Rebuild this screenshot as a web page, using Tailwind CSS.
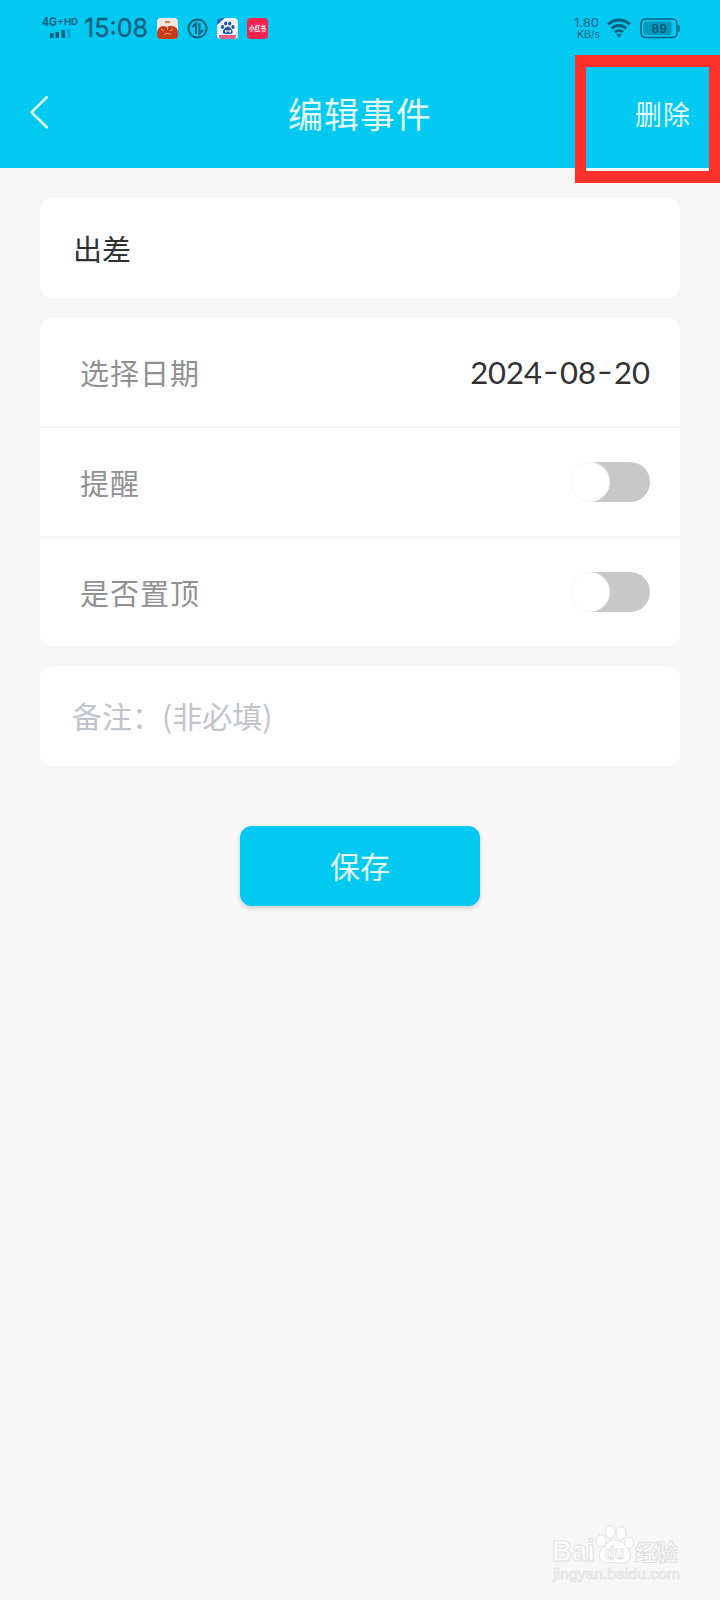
<!DOCTYPE html>
<html lang="zh-CN">
<head>
<meta charset="utf-8">
<title>编辑事件</title>
<script src="https://cdn.jsdelivr.net/npm/@tailwindcss/browser@4"></script>
</head>
<body class="bg-[#f6f6f6] font-['Noto_Sans_CJK_SC',sans-serif]">
<div class="relative flex h-[1600px] w-[720px] flex-col overflow-hidden bg-[#f7f7f7]">
  <header class="flex h-[168px] shrink-0 flex-col bg-[#02c9f1]">
    <div class="flex h-14 items-center justify-between pr-10 pl-[41px] font-[Inter,sans-serif] text-[#075f7d]">
      <div class="flex items-center">
        <svg class="h-[26px] w-[40px] overflow-visible" viewBox="0 0 40 26">
          <g font-family="Inter" font-weight="700" fill="#075f7d">
            <text x="1" y="11" font-size="11.500" textLength="15" lengthAdjust="spacingAndGlyphs">4G</text>
            <text x="16.500" y="9" font-size="9">+</text>
            <text x="23" y="9.500" font-size="9" textLength="14" lengthAdjust="spacingAndGlyphs">HD</text>
          </g>
          <g fill="#075f7d">
            <rect x="9" y="18" width="3.500" height="5"/><rect x="14.500" y="17" width="3.500" height="6"/><rect x="20.500" y="15" width="3.500" height="8"/><rect x="26" y="13.500" width="4" height="9.500" opacity=".2"/>
          </g>
        </svg>
        <svg class="ml-[3px] h-8 w-[65px]" viewBox="0 0 65 32"><text x="0" y="25" font-family="Inter" font-weight="400" font-size="25" fill="#075f7d" stroke="#075f7d" stroke-width=".3" textLength="64" lengthAdjust="spacingAndGlyphs">15:08</text></svg>
        <svg class="ml-[8px] h-[21px] w-[21px]" viewBox="0 0 21 21">
          <rect width="21" height="20.500" rx="4" fill="#f3e8df"/><path d="M8 3h5v2H8z" fill="#e8783f"/>
          <path d="M0 16C0 11 3 8 6.500 8c2 0 2.500 1.500 4.500.5C15 7 21 9 21 14v3a4 4 0 0 1-4 4H4a4 4 0 0 1-4-4z" fill="#c63c1b"/>
          <path d="m4 11 3 2M16 11l-3 2M10.500 9v3M7 17c1-2 6-2 7 0" stroke="#ffb48c" stroke-width="1" fill="none"/>
        </svg>
        <svg class="ml-[9px] h-[21px] w-[21px]" viewBox="0 0 21 21" fill="none" stroke="#075f7d" stroke-width="2">
          <circle cx="10.500" cy="10.500" r="9"/><path d="M5.500 9 9 5.500V16M12.500 5v10.500l3.500-3.500"/>
        </svg>
        <svg class="ml-[9px] h-[21px] w-[21px]" viewBox="0 0 21 21">
          <rect width="21" height="21" rx="4" fill="#f0f6ff"/><path d="M0 4a4 4 0 0 1 4-4h4L0 7z" fill="#2468c9"/>
          <g fill="#2054a5"><ellipse cx="5.500" cy="9" rx="1.600" ry="2"/><ellipse cx="8.700" cy="5.500" rx="1.600" ry="2"/><ellipse cx="12.700" cy="5.500" rx="1.600" ry="2"/><ellipse cx="16" cy="9" rx="1.600" ry="2"/><path d="M10.700 8.500c2 0 5 3.500 5 5.500s-2 2-5 2-5 0-5-2 3-5.500 5-5.500z"/></g>
          <path d="M8.500 12v2h1.500v-2M12 12v2h1.500v-2" stroke="#fff" fill="none"/><path d="M2 17h17v2a2 2 0 0 1-2 2H4a2 2 0 0 1-2-2z" fill="#e7627f"/>
        </svg>
        <svg class="ml-[9px] h-[21px] w-[21px]" viewBox="0 0 21 21">
          <rect width="21" height="21" rx="4" fill="#f7234f"/><text x="2" y="13" font-family="Noto Sans CJK SC" font-size="6.500" font-weight="700" fill="#fff" textLength="17" lengthAdjust="spacingAndGlyphs">小红书</text>
        </svg>
      </div>
      <div class="flex items-center">
        <svg class="h-6 w-[28px]" viewBox="0 0 28 24"><g font-family="Inter" fill="#075f7d"><text x="0" y="11" font-size="12" textLength="25" lengthAdjust="spacingAndGlyphs">1.80</text><text x="3" y="21.500" font-size="10" textLength="23" lengthAdjust="spacingAndGlyphs">KB/s</text></g></svg>
        <svg class="ml-[5px] h-5 w-6" viewBox="0 0 24 20" fill="none" stroke="#075f7d" stroke-width="2.800"><path d="M1.200 6.500c6-6 15.600-6 21.600 0M4.700 10.500c4-4 10.600-4 14.600 0M8 14.300c2.200-2.200 5.800-2.200 8 0"/><path d="m9.500 16.800 2.500 2.700 2.500-2.700a4 4 0 0 0-5 0z" fill="#075f7d" stroke="none"/></svg>
        <svg class="ml-[9px] h-[21px] w-[40px]" viewBox="0 0 40 21"><rect x="1" y="1" width="36" height="18.500" rx="4.500" fill="none" stroke="#075f7d" stroke-width="1.500"/><rect x="3.500" y="3.500" width="28" height="13.500" rx="2" fill="#0798bb"/><path d="M39 7.500v6" stroke="#075f7d" stroke-width="1.500"/><text x="11.500" y="14.500" font-family="Inter" font-size="12" font-weight="500" fill="#075070" textLength="15.500">89</text></svg>
      </div>
    </div>
    <nav class="grid flex-1 grid-cols-3 items-center px-[29px] text-[#e2fcff]">
      <svg class="h-[34px] w-5" viewBox="0 0 20 34" fill="none" stroke="#e2fcff" stroke-width="2.500"><path d="M18.500 1.500 2.500 17.300l16 15.700"/></svg>
      <h1 class="pt-px text-center text-[35px] leading-[52px] tracking-[1px] whitespace-nowrap">编辑事件</h1>
      <div class="pt-[3px] text-right text-[27px] leading-[52px] tracking-[1px]">删除</div>
    </nav>
  </header>

  <main class="flex flex-col gap-5 px-10 pt-[30px]">
    <div class="flex h-[100px] items-center rounded-xl bg-white pt-0.5 pl-[33px] text-[29px] text-[#303133]">出差</div>
    <div class="flex h-[328px] flex-col divide-y-2 divide-[#f6f6f6] rounded-xl bg-white text-[29px] tracking-[1px] text-[#909193]">
      <div class="flex h-[110px] items-center justify-between pr-[30px] pl-10">
        <span class="pt-px">选择日期</span>
        <span class="flex items-center pt-px font-[Lato,sans-serif] text-[31px] tracking-normal text-[#303133]"><span>2024</span><span class="flex w-[18px] justify-center"><span class="inline-block scale-x-[1.4] pb-1">-</span></span><span>08</span><span class="flex w-[18px] justify-center"><span class="inline-block scale-x-[1.4] pb-1">-</span></span><span>20</span></span>
      </div>
      <div class="flex h-[110px] items-center justify-between pr-[30px] pl-10">
        <span class="pt-px">提醒</span>
        <span class="flex h-10 w-20 rounded-full bg-gradient-to-r from-white from-25% to-[#c8c8c8] to-25%"><span class="size-10 rounded-full border border-[#f8f8f8] bg-white"></span></span>
      </div>
      <div class="flex h-[108px] items-center justify-between pr-[30px] pl-10">
        <span class="pt-px">是否置顶</span>
        <span class="flex h-10 w-20 rounded-full bg-gradient-to-r from-white from-25% to-[#c8c8c8] to-25%"><span class="size-10 rounded-full border border-[#f8f8f8] bg-white"></span></span>
      </div>
    </div>
    <div class="flex h-[100px] items-center rounded-xl bg-white pb-0.5 pl-8 text-[30px] text-[#c0c4cc]">备注：(非必填)</div>
    <button class="mt-10 h-20 w-60 self-center rounded-xl bg-[#02c9f1] pb-0.5 text-[30px] text-[#e2fcff] shadow-[0_2px_4px_rgba(0,0,0,0.18)]">保存</button>
  </main>

  <div class="absolute top-[55px] left-[575px] h-[128px] w-[145px] bg-[#ff3029] [clip-path:polygon(0_0,100%_0,100%_100%,0_100%,0_12px,11px_12px,11px_116px,134px_116px,134px_12px,0_12px)]"></div>
  <div class="absolute top-[168px] left-[586px] h-[3px] w-[123px] bg-white"></div>

  <svg class="absolute top-[1515px] left-[548px] h-[68px] w-[140px]" viewBox="0 0 140 68">
    <g fill="#fff" stroke="#e0e0e0" stroke-width="1">
      <text x="4" y="46" font-family="Liberation Sans" font-weight="700" font-size="29" textLength="43" lengthAdjust="spacingAndGlyphs">Bai</text>
      <ellipse cx="53" cy="26" rx="5" ry="6"/><ellipse cx="62" cy="17" rx="5" ry="6.500"/><ellipse cx="73" cy="18" rx="5" ry="6.500"/><ellipse cx="81" cy="28" rx="4.500" ry="6"/>
      <path d="M66 25c-6 0-8 5-12 9-5 5-3 14 5 14 5 0 9-1 14 0 8 1 12-7 8-13-3-4-7-10-15-10z"/>
      <text x="57" y="44" font-family="Liberation Sans" font-weight="700" font-size="18" textLength="19" lengthAdjust="spacingAndGlyphs">du</text>
      <text x="87" y="45" font-family="Noto Sans CJK SC" font-weight="700" font-size="22" textLength="43">经验</text>
      <text x="5" y="64" font-family="Liberation Sans" font-size="14" stroke-width=".7" textLength="127" lengthAdjust="spacingAndGlyphs">jingyan.baidu.com</text>
    </g>
  </svg>
</div>
</body>
</html>
